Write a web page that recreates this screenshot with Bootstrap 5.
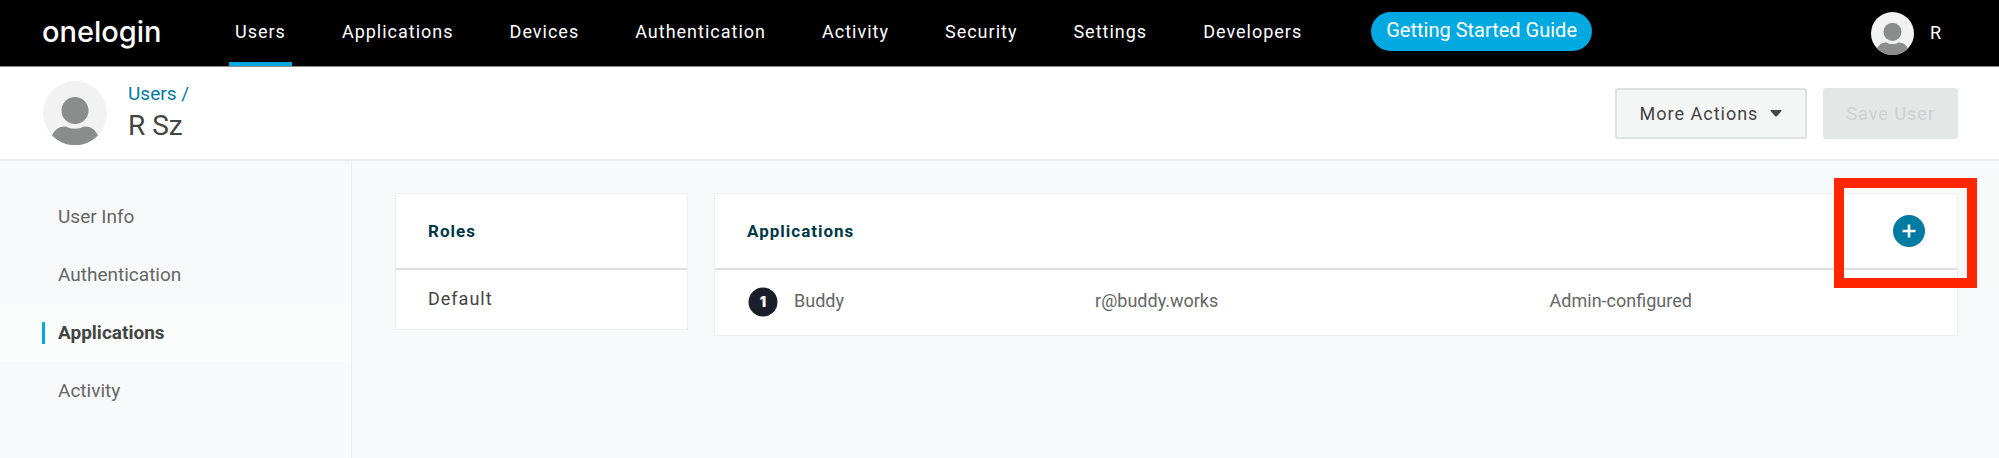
<!DOCTYPE html>
<html lang="en">
<head>
<meta charset="utf-8">
<meta name="viewport" content="width=device-width, initial-scale=1">
<title>R Sz - Applications</title>
<link href="https://cdn.jsdelivr.net/npm/bootstrap@5.3.0/dist/css/bootstrap.min.css" rel="stylesheet">
<style>
  body { font-family: Roboto, "Liberation Sans", sans-serif; font-size: 18px; line-height: 24px; color: #444; background: #f8f9fb; }
  .tracked { letter-spacing: 1px; }

  .topbar { background: #000; border-bottom: 1px solid #8c8c8c; padding: 0 42px; height: 67px; }
  .wordmark { font-family: Inter, sans-serif; font-weight: 500; font-size: 29px; line-height: 40px; color: #fff; width: 187px; padding-bottom: 2px; }
  .topnav { gap: 44px; height: 66px; }
  .topnav .nav-link { color: #fff; padding: 0 6px; border-bottom: 4px solid transparent; border-top: 2px solid transparent; display: flex; align-items: center; }
  .topnav .nav-link.active { border-bottom-color: #00a9e0; }
  .guide { background: #00a9e0; color: #fff; font-size: 20px; line-height: 24px; padding: 6px 15px 9px; border: 0; margin-left: 63px; }
  .guide:hover { background: #0098ca; color: #fff; }

  .pagehead { background: #fff; border-bottom: 2px solid #ebeced; padding: 0 41px 0 43px; min-height: 94px; gap: 21px; }
  .crumb { color: #007b9e; font-size: 19px; margin-bottom: 2px; }
  .pagehead h1 { font-size: 28px; line-height: 36px; color: #444; }
  .action { height: 51px; border-radius: 3px; font-size: 18px; padding: 0 23px; }
  .more { background: #f4f6f6; border: 2px solid #dfe1e1; color: #444; }
  .save, .save:disabled { background: #e5e7e6; border: 0; color: #cfd1d1; opacity: 1; }

  .side { width: 352px; border-right: 1px solid #eceeef; padding-top: 27px; font-size: 19px; }
  .side .nav-link { color: #666; height: 58px; padding: 0 0 0 42px; }
  .side .nav-link span { border-left: 3px solid transparent; padding-left: 13px; line-height: 22px; }
  .side .nav-link.active { background: #fbfdfc; color: #444; font-weight: 700; }
  .side .nav-link.active span { border-left-color: #00a9e0; }

  .workspace { padding: 32px 41px 32px 43px; gap: 26px; }
  .panel { background: #fff; border: 1px solid #eceeef; }
  .roles { width: 293px; }
  .panel-top { height: 76px; padding: 0 32px; border-bottom: 2px solid #dee0e0; }
  .panel-top h2 { font-size: 17px; line-height: 24px; font-weight: 700; color: #003746; }
  .role { padding: 17px 32px 18px; }
  .apps td { border: 0; padding: 15px 0 18px; color: #666; background: transparent; line-height: 32px; }
  .apps td:first-child { padding-left: 33px; }
  .add { width: 32px; height: 32px; }
  .callout-box { position: absolute; right: -20px; top: -16px; width: 143px; height: 110px; border: 10px solid #ff2600; pointer-events: none; }
</style>
</head>
<body class="min-vh-100 d-flex flex-column">
<svg class="d-none" aria-hidden="true">
  <symbol id="person" viewBox="0 0 64 64">
    <circle cx="32" cy="32" r="32" fill="#f2f2f2"/>
    <circle cx="32" cy="29.500" r="13.500" fill="#8b8d8c"/>
    <path d="M9 54.500C12 48 17 45 23 45.500C28 48.500 36 48.500 41 45.500C47 45 52 48 55 54.500A32 32 0 0 1 9 54.500Z" fill="#8b8d8c"/>
  </symbol>
</svg>

<header class="topbar d-flex align-items-center">
  <a href="#" class="wordmark text-decoration-none">onelogin</a>
  <nav class="topnav nav flex-nowrap tracked" aria-label="Main">
    <a class="nav-link active" aria-current="page" href="#">Users</a>
    <a class="nav-link" href="#">Applications</a>
    <a class="nav-link" href="#">Devices</a>
    <a class="nav-link" href="#">Authentication</a>
    <a class="nav-link" href="#">Activity</a>
    <a class="nav-link" href="#">Security</a>
    <a class="nav-link" href="#">Settings</a>
    <a class="nav-link" href="#">Developers</a>
  </nav>
  <button type="button" class="btn guide rounded-pill mb-1">Getting Started Guide</button>
  <a href="#" class="d-flex align-items-center gap-3 ms-auto me-3 text-white text-decoration-none">
    <svg width="43" height="43" aria-hidden="true"><use href="#person"/></svg>
    <span>R</span>
  </a>
</header>

<section class="pagehead d-flex align-items-center">
  <svg width="64" height="64" aria-hidden="true"><use href="#person"/></svg>
  <div>
    <a href="#" class="crumb text-decoration-none d-block">Users /</a>
    <h1 class="m-0 fw-normal">R Sz</h1>
  </div>
  <div class="ms-auto d-flex gap-3">
    <button type="button" class="btn action more tracked d-flex align-items-center">More Actions
      <svg class="ms-2 ps-1" width="16" height="7" viewBox="0 0 12 7" aria-hidden="true"><path d="M1 0H11Q12 0 11.500 1L7 6Q6 7 5 6L.5 1Q0 0 1 0Z" fill="#444"/></svg>
    </button>
    <button type="button" class="btn action save tracked" disabled>Save User</button>
  </div>
</section>

<div class="d-flex flex-grow-1">
  <nav class="side nav flex-column flex-nowrap flex-shrink-0" aria-label="User">
    <a class="nav-link d-flex align-items-center" href="#"><span>User Info</span></a>
    <a class="nav-link d-flex align-items-center" href="#"><span>Authentication</span></a>
    <a class="nav-link d-flex align-items-center active" aria-current="page" href="#"><span>Applications</span></a>
    <a class="nav-link d-flex align-items-center" href="#"><span>Activity</span></a>
  </nav>
  <main class="workspace d-flex align-items-start flex-grow-1">
    <section class="panel roles flex-shrink-0">
      <div class="panel-top d-flex align-items-center"><h2 class="m-0 tracked">Roles</h2></div>
      <div class="role tracked">Default</div>
    </section>
    <section class="panel flex-grow-1 position-relative">
      <div class="panel-top d-flex align-items-center justify-content-between">
        <h2 class="m-0 tracked">Applications</h2>
        <button type="button" class="btn add p-0 border-0 d-flex" aria-label="Add application">
          <svg width="32" height="32" viewBox="0 0 32 32" aria-hidden="true"><circle cx="16" cy="16" r="16" fill="#007ba1"/><path d="M16 9.500V22.500M9.500 16H22.500" stroke="#fff" stroke-width="2.600"/></svg>
        </button>
      </div>
      <table class="apps table m-0">
        <colgroup><col style="width:30.6%"><col style="width:36.6%"><col></colgroup>
        <tbody>
          <tr>
            <td><div class="d-flex align-items-center"><svg class="me-3" width="30" height="32" viewBox="0 0 30 32" aria-hidden="true"><circle cx="15" cy="17" r="14.500" fill="#1c1f2a"/><text x="15" y="22" text-anchor="middle" font-family="Inter, sans-serif" font-weight="900" font-size="14" fill="#fff">1</text></svg>Buddy</div></td>
            <td>r@buddy.works</td>
            <td>Admin-configured</td>
          </tr>
        </tbody>
      </table>
      <div class="callout-box"></div>
    </section>
  </main>
</div>
<script src="https://cdn.jsdelivr.net/npm/bootstrap@5.3.0/dist/js/bootstrap.bundle.min.js"></script>
</body>
</html>
